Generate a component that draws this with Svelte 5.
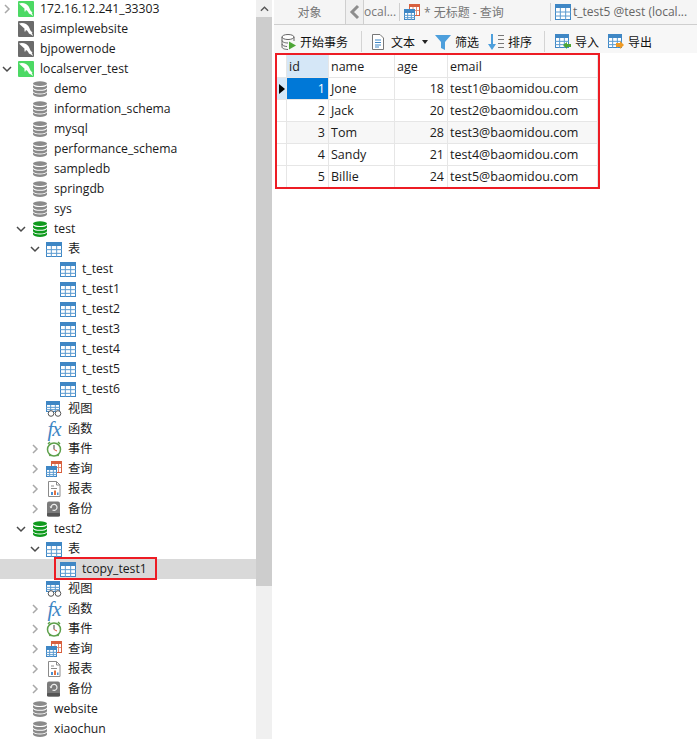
<script>
  const tree = [
    { level: 0, arrow: 'closed', icon: 'dolphin-on', label: '172.16.12.241_33303' },
    { level: 0, icon: 'dolphin-off', label: 'asimplewebsite' },
    { level: 0, icon: 'dolphin-off', label: 'bjpowernode' },
    { level: 0, arrow: 'open', icon: 'dolphin-on', label: 'localserver_test' },
    { level: 1, icon: 'db', label: 'demo' },
    { level: 1, icon: 'db', label: 'information_schema' },
    { level: 1, icon: 'db', label: 'mysql' },
    { level: 1, icon: 'db', label: 'performance_schema' },
    { level: 1, icon: 'db', label: 'sampledb' },
    { level: 1, icon: 'db', label: 'springdb' },
    { level: 1, icon: 'db', label: 'sys' },
    { level: 1, arrow: 'open', icon: 'db-on', label: 'test' },
    { level: 2, arrow: 'open', icon: 'table', label: '表' },
    { level: 3, icon: 'table', label: 't_test' },
    { level: 3, icon: 'table', label: 't_test1' },
    { level: 3, icon: 'table', label: 't_test2' },
    { level: 3, icon: 'table', label: 't_test3' },
    { level: 3, icon: 'table', label: 't_test4' },
    { level: 3, icon: 'table', label: 't_test5' },
    { level: 3, icon: 'table', label: 't_test6' },
    { level: 2, icon: 'view', label: '视图' },
    { level: 2, icon: 'fx', label: '函数' },
    { level: 2, arrow: 'closed', icon: 'clock', label: '事件' },
    { level: 2, arrow: 'closed', icon: 'query', label: '查询' },
    { level: 2, arrow: 'closed', icon: 'report', label: '报表' },
    { level: 2, arrow: 'closed', icon: 'backup', label: '备份' },
    { level: 1, arrow: 'open', icon: 'db-on', label: 'test2' },
    { level: 2, arrow: 'open', icon: 'table', label: '表' },
    { level: 3, icon: 'table', label: 'tcopy_test1', selected: true },
    { level: 2, icon: 'view', label: '视图' },
    { level: 2, arrow: 'closed', icon: 'fx', label: '函数' },
    { level: 2, arrow: 'closed', icon: 'clock', label: '事件' },
    { level: 2, arrow: 'closed', icon: 'query', label: '查询' },
    { level: 2, arrow: 'closed', icon: 'report', label: '报表' },
    { level: 2, arrow: 'closed', icon: 'backup', label: '备份' },
    { level: 1, icon: 'db', label: 'website' },
    { level: 1, icon: 'db', label: 'xiaochun' }
  ];

  const rows = [
    { id: 1, name: 'Jone', age: 18, email: 'test1@baomidou.com' },
    { id: 2, name: 'Jack', age: 20, email: 'test2@baomidou.com' },
    { id: 3, name: 'Tom', age: 28, email: 'test3@baomidou.com' },
    { id: 4, name: 'Sandy', age: 21, email: 'test4@baomidou.com' },
    { id: 5, name: 'Billie', age: 24, email: 'test5@baomidou.com' }
  ];
</script>

{#snippet grid(x, y, w, h)}
  <rect x={x + 0.5} y={y + 0.5} width={w - 1} height={h - 1} fill="#fff" stroke="#3f87c5" />
  <rect x={x} y={y} width={w} height="4" fill="#3f87c5" />
  <path d="M{x + w / 3} {y + 4}V{y + h}M{x + (2 * w) / 3} {y + 4}V{y + h}M{x} {y + 4 + (h - 4) / 3}H{x + w}M{x} {y + 4 + (2 * (h - 4)) / 3}H{x + w}" stroke="#5b9bd0" fill="none" />
{/snippet}

{#snippet stack(color)}
  <svg class="ico" viewBox="0 0 16 16">
    <ellipse cx="8" cy="2.600" rx="7" ry="2.400" fill={color} />
    <path d="M1 4.200c1 1.300 3.600 1.900 7 1.900s6-.6 7-1.900v2.300c-.6 1.500-3.400 2.300-7 2.300s-6.400-.8-7-2.300z" fill={color} />
    <path d="M1 7.900c1 1.300 3.600 1.900 7 1.900s6-.6 7-1.900v2.300c-.6 1.500-3.400 2.300-7 2.300s-6.400-.8-7-2.300z" fill={color} />
    <path d="M1 11.600c1 1.300 3.600 1.900 7 1.900s6-.6 7-1.900v1.900c-.6 1.500-3.400 2.500-7 2.500s-6.400-1-7-2.500z" fill={color} />
  </svg>
{/snippet}

{#snippet icon(kind)}
  {#if kind === 'dolphin-on' || kind === 'dolphin-off'}
    <svg class="ico" viewBox="0 0 16 16">
      <rect width="16" height="16" rx="1" fill={kind === 'dolphin-on' ? '#4cd964' : '#6b6b6b'} />
      <path d="M1 2.500C3 1.500 6 1.800 8 3c2.500 1.500 3.300 3.600 4 5.500.3 1.200 1.200 2.200 2.500 2.800l-.8.700c.6.800 1 1.800 1.200 3-1.200-1-2.500-2-4-2.500-.5-1.600-1.500-2.800-3-3.500-.3 1-.5 1.500-1 2-.5-1.200-.5-2.500-.4-3.500C5 6.300 3 4.600 1 2.500z" fill="#fff" />
    </svg>
  {:else if kind === 'db'}
    {@render stack('#8a8a8a')}
  {:else if kind === 'db-on'}
    {@render stack('#0e9a1c')}
  {:else if kind === 'table'}
    <svg class="ico" viewBox="0 0 16 16">{@render grid(0, 1, 16, 15)}</svg>
  {:else if kind === 'view'}
    <svg class="ico" viewBox="0 0 16 16">
      {@render grid(0, 0, 14, 11)}
      <circle cx="5" cy="12.500" r="2.800" fill="#fff" stroke="#555" />
      <circle cx="12" cy="12.500" r="2.800" fill="#fff" stroke="#555" />
    </svg>
  {:else if kind === 'fx'}
    <span class="ico fx">fx</span>
  {:else if kind === 'clock'}
    <svg class="ico" viewBox="0 0 16 16">
      <circle cx="8" cy="8.500" r="6.500" fill="#fff" stroke="#5da04a" stroke-width="1.500" />
      <path d="M2 3l2-2M14 3l-2-2M3.500 15l1-1.500M12.500 15l-1-1.500" stroke="#5da04a" stroke-width="1.500" />
      <path d="M8 4v4.500" stroke="#444" />
      <path d="M8 8.500l3 1.500" stroke="#d8553a" />
    </svg>
  {:else if kind === 'query'}
    <svg class="ico" viewBox="0 0 16 16">
      <rect x="5.500" y="0.500" width="10" height="11" fill="#fff" stroke="#d8603f" />
      <rect x="5" y="0" width="11" height="3" fill="#d8603f" />
      <path d="M9 3v8M12.500 3v8M6 6.500h9" stroke="#e39079" />
      {@render grid(0, 5, 11, 11)}
    </svg>
  {:else if kind === 'report'}
    <svg class="ico" viewBox="0 0 16 16">
      <path d="M2.500.5h8l3.500 3.500v11.500H2.500z" fill="#fff" stroke="#8a8a8a" />
      <path d="M10.500.5v3.500H14M5 5h3M5 7.500h6" stroke="#8a8a8a" fill="none" />
      <rect x="5" y="11" width="2" height="3" fill="#4a90d0" />
      <rect x="8" y="9.500" width="2" height="4.500" fill="#e0703f" />
      <rect x="11" y="11.500" width="1.500" height="2.500" fill="#4a90d0" />
    </svg>
  {:else if kind === 'backup'}
    <svg class="ico" viewBox="0 0 16 16">
      <rect x="1" y="0.500" width="13" height="15" rx="2" fill="#7b7b7b" />
      <rect x="1" y="12" width="13" height="3.500" rx="1" fill="#555" />
      <path d="M5 6.500a3 3 0 1 1 1.500 2.500" fill="none" stroke="#eee" stroke-width="1.200" />
      <path d="M3.500 5.500h3l-1.500 2z" fill="#eee" />
    </svg>
  {/if}
{/snippet}

<div class="app">
  <aside class="sidebar">
    <div class="tree">
      {#each tree as node}
        <div class="row" class:selected={node.selected} style="padding-left: {node.level * 14}px">
          <span class="arrow">
            {#if node.arrow === 'open'}
              <svg viewBox="0 0 12 12"><path d="M2 4l4 4 4-4" fill="none" stroke="#4a4a4a" stroke-width="1.500" /></svg>
            {:else if node.arrow === 'closed'}
              <svg viewBox="0 0 12 12"><path d="M4 2l4 4-4 4" fill="none" stroke="#a8a8a8" stroke-width="1.500" /></svg>
            {/if}
          </span>
          <span class="node" class:marked={node.selected}>
            {@render icon(node.icon)}
            <span class="label">{node.label}</span>
          </span>
        </div>
      {/each}
    </div>
    <div class="scrollbar">
      <div class="up">
        <svg viewBox="0 0 10 6"><path d="M1 5l4-4 4 4" fill="none" stroke="#555" stroke-width="1.500" /></svg>
      </div>
      <div class="thumb"></div>
    </div>
  </aside>

  <main class="content">
    <div class="tabs">
      <div class="tab objects">对象</div>
      <div class="scroll-left">
        <svg viewBox="0 0 12 16"><path d="M9 2L3 8l6 6" fill="none" stroke="#8d8d8d" stroke-width="3" /></svg>
      </div>
      <div class="tab cut">ocal...</div>
      <div class="tab query">
        {@render icon('query')}
        <span>* 无标题 - 查询</span>
      </div>
      <div class="tab last">
        <svg class="ico" viewBox="0 0 16 16">{@render grid(0, 0, 16, 16)}</svg>
        <span>t_test5 @test (local...</span>
      </div>
    </div>

    <div class="toolbar">
      <div class="tool begin">
        <svg class="ico" viewBox="0 0 16 16">
          <ellipse cx="7" cy="3" rx="6" ry="2.500" fill="#fff" stroke="#666" />
          <path d="M1 3v10c0 1.400 2.700 2.500 6 2.500M13 3v4M1 6.500c0 1.400 2.700 2.500 6 2.500M1 10c0 1.400 2.700 2.500 5 2.500" fill="none" stroke="#666" />
          <path d="M8 7.500l7 4-7 4z" fill="#4da636" />
        </svg>
        <span>开始事务</span>
      </div>
      <div class="sep"></div>
      <div class="tool text">
        <svg class="ico" viewBox="0 0 16 16">
          <path d="M1.500.5h7.500l3.500 3.500v11.500h-11z" fill="#fff" stroke="#777" />
          <path d="M4 6h6M4 8.500h6M4 11h6M4 13h4" stroke="#3f87c5" />
        </svg>
        <span>文本</span>
        <i class="caret"></i>
      </div>
      <div class="tool filter">
        <svg class="ico" viewBox="0 0 16 16">
          <path d="M0 1h16l-6 7v8l-4-2V8z" fill="#4d9fdc" />
        </svg>
        <span>筛选</span>
      </div>
      <div class="tool sort">
        <svg class="ico" viewBox="0 0 16 16">
          <path d="M4 0v13" stroke="#4d9fdc" stroke-width="2" />
          <path d="M0 10h8l-4 6z" fill="#4d9fdc" />
          <path d="M10 1.500h6M10 5.500h6M10 9.500h6M10 13.500h6" stroke="#777" />
        </svg>
        <span>排序</span>
      </div>
      <div class="sep second"></div>
      <div class="tool import">
        <svg class="ico" viewBox="0 0 16 16">
          {@render grid(0, 0, 14, 14)}
          <path d="M8 11l4-3v2h4v3h-4v2z" fill="#4da636" />
        </svg>
        <span>导入</span>
      </div>
      <div class="tool export">
        <svg class="ico" viewBox="0 0 16 16">
          {@render grid(0, 0, 14, 14)}
          <path d="M8 9h4V7l4 4-4 4v-2H8z" fill="#ee9a25" />
        </svg>
        <span>导出</span>
      </div>
    </div>

    <div class="result">
      <div class="sheet">
        <div class="corner"></div>
        <div class="head on">id</div>
        <div class="head">name</div>
        <div class="head">age</div>
        <div class="head">email</div>
        {#each rows as row, i}
          <div class="gutter" class:on={i === 0}>
            {#if i === 0}<i class="pointer"></i>{/if}
          </div>
          <div class="cell num" class:alt={i === 2} class:current={i === 0}>{row.id}</div>
          <div class="cell" class:alt={i === 2}>{row.name}</div>
          <div class="cell num" class:alt={i === 2}>{row.age}</div>
          <div class="cell" class:alt={i === 2}>{row.email}</div>
        {/each}
      </div>
    </div>
  </main>
</div>

<style>
  :global(body) {
    margin: 0;
    background: #fff;
  }
  .app {
    display: flex;
    width: 697px;
    height: 739px;
    overflow: hidden;
    font-family: "Open Sans", "Noto Sans CJK SC", sans-serif;
    font-size: 12px;
    color: #1a1a1a;
  }
  .ico {
    display: block;
    width: 16px;
    height: 16px;
    flex: none;
  }

  /* left tree */
  .sidebar {
    display: flex;
    width: 274px;
    flex: none;
  }
  .tree {
    width: 256px;
    flex: none;
    margin-top: -1px;
    font-size: 12.2px;
  }
  .row {
    display: flex;
    align-items: center;
    height: 20px;
    box-sizing: border-box;
    white-space: nowrap;
  }
  .row.selected {
    background: #d9d9d9;
  }
  .arrow {
    display: flex;
    justify-content: center;
    width: 14px;
    margin-right: 4px;
    flex: none;
  }
  .arrow svg {
    width: 12px;
    height: 12px;
  }
  .node {
    display: flex;
    align-items: center;
    gap: 6px;
  }
  .node.marked {
    position: relative;
  }
  .node.marked::after {
    content: '';
    position: absolute;
    left: -6px;
    right: -10px;
    top: -2px;
    bottom: -1px;
    border: 2px solid #ed1c24;
  }
  .label {
    line-height: 20px;
  }
  .fx {
    font-family: "Liberation Serif", serif;
    font-style: italic;
    font-size: 21px;
    line-height: 16px;
    letter-spacing: -1px;
    color: #3f87c5;
    text-align: center;
  }

  .scrollbar {
    width: 16px;
    background: #f0f0f0;
    flex: none;
  }
  .up {
    display: flex;
    align-items: center;
    justify-content: center;
    height: 17px;
  }
  .up svg {
    width: 9px;
    height: 6px;
  }
  .thumb {
    height: 569px;
    background: #cdcdcd;
  }

  /* right panel */
  .content {
    flex: 1;
    min-width: 0;
  }
  .tabs {
    display: flex;
    height: 24px;
    background: #f5f5f5;
    border-bottom: 1px solid #cfcfcf;
    color: #777;
    overflow: hidden;
  }
  .tab {
    display: flex;
    align-items: center;
    gap: 4px;
    box-sizing: border-box;
    white-space: nowrap;
    flex: none;
    padding-bottom: 1px;
  }
  .objects {
    width: 72px;
    justify-content: center;
    border-right: 1px solid #cfcfcf;
  }
  .scroll-left {
    display: flex;
    align-items: center;
    justify-content: center;
    width: 17px;
    background: #f0f0f0;
    border-right: 1px solid #cfcfcf;
  }
  .scroll-left svg {
    width: 12px;
    height: 16px;
  }
  .cut {
    width: 36px;
    border-right: 1px solid #cfcfcf;
    height: 18px;
    margin-top: 3px;
    overflow: hidden;
  }
  .query {
    width: 150px;
    padding-left: 4px;
  }
  .last {
    border-left: 1px solid #cfcfcf;
    height: 18px;
    margin-top: 3px;
    padding-left: 4px;
    gap: 2px;
    color: #666;
  }

  .toolbar {
    display: flex;
    align-items: center;
    box-sizing: border-box;
    height: 28px;
    padding: 5px 0 0 7px;
    background: #f7f7f7;
  }
  .tool {
    display: flex;
    align-items: center;
    gap: 4px;
    white-space: nowrap;
    color: #111;
  }
  .begin {
    gap: 3px;
  }
  .sep {
    width: 1px;
    height: 21px;
    background: #d4d4d4;
    margin: 0 9px 0 13px;
  }
  .sep.second {
    margin: 0 10px 0 12px;
  }
  .text {
    gap: 5px;
  }
  .text .ico {
    margin-right: -1px;
  }
  .caret {
    width: 0;
    height: 0;
    margin: 0 7px 0 2px;
    border: 3.500px solid transparent;
    border-top: 4px solid #222;
    border-bottom: none;
  }
  .filter {
    margin-right: 9px;
  }
  .import {
    margin-right: 9px;
  }

  .result {
    padding: 0 0 0 1px;
  }
  .sheet {
    display: grid;
    grid-template-columns: 10px 42px 66px 53px 150px;
    grid-template-rows: 23px repeat(5, 22px);
    width: 321px;
    border: 2px solid #ed1c24;
    overflow: hidden;
    background: #fff;
    height: 132px;
    font-size: 12.5px;
  }
  .corner,
  .head,
  .gutter,
  .cell {
    display: flex;
    align-items: center;
    box-sizing: border-box;
    padding: 0 3px 0 2px;
    border-right: 1px solid #e6e6e6;
    border-bottom: 1px solid #e6e6e6;
    white-space: nowrap;
  }
  .head.on,
  .gutter.on {
    background: #d5e7f7;
  }
  .gutter {
    padding: 0;
  }
  .pointer {
    width: 0;
    height: 0;
    margin-left: 2px;
    border-left: 6px solid #000;
    border-top: 5px solid transparent;
    border-bottom: 5px solid transparent;
  }
  .num {
    justify-content: flex-end;
  }
  .alt {
    background: #f7f7f7;
  }
  .current {
    background: #0078d7;
    color: #fff;
  }
</style>
